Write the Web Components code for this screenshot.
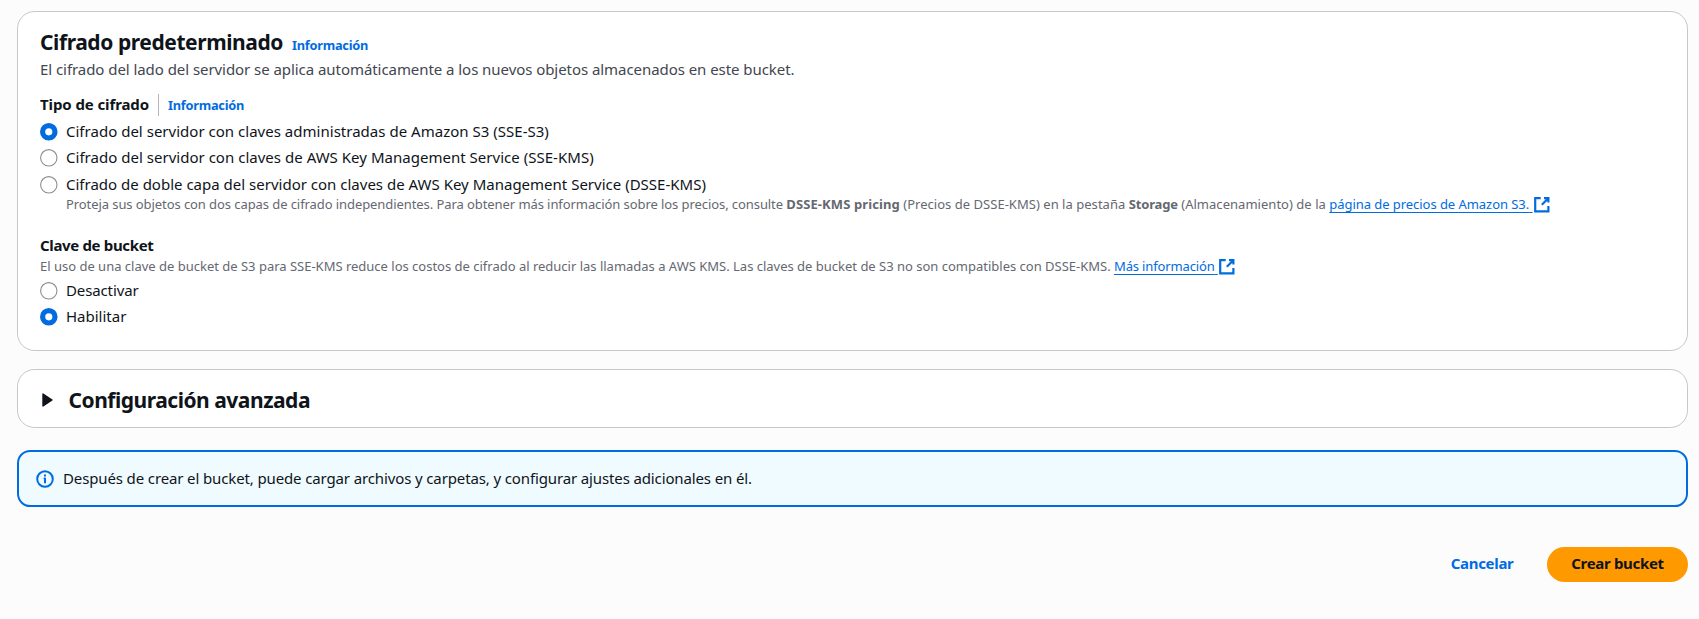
<!DOCTYPE html>
<html lang="es">
<head>
<meta charset="utf-8">
<title>Crear bucket</title>
<style>
html, body { margin: 0; }
body { background: #fcfcfd; color: #0f141a; font: 15px/22px "Noto Sans", "Open Sans", sans-serif; }
</style>
</head>
<body>
<bucket-page></bucket-page>

<template id="t-page">
<style>
:host { display: flex; flex-direction: column; padding: 11px 11px 0 17px; }
ui-card > * { white-space: pre; }
.hd { display: flex; align-items: baseline; height: 27px; gap: 9px; }
.desc { color: #424650; letter-spacing: -.057px; margin-top: 2px; }
.lab { display: flex; font-weight: 700; margin-top: 13px; letter-spacing: -.1px; }
.lab i { width: 1px; background: #b4b4bb; margin: 1px 9px -1px 9px; }
.lab info-link { padding-top: 1px; margin-bottom: -1px; }
.help { color: #656871; font-size: 13px; line-height: 18px; }
.more { padding-left: 26px; letter-spacing: -.078px; height: 18px; }
.more b { letter-spacing: .1px; }
.more .s { letter-spacing: .03px; }
.clave { font-weight: 700; margin: 21px 0 1px; letter-spacing: -.34px; }
.bk { letter-spacing: -.006px; height: 18px; }
.gap4 { margin-top: 4px; } .gap5 { margin-top: 5px; }
.adv { display: flex; align-items: center; }
.adv svg { width: 11px; height: 14px; margin: 1px 15.5px 0 2px; }
.adv ui-title { padding-top: 1px; margin-bottom: -1px; }
ui-card + ui-card { margin-top: 18px; }
ui-alert { margin-top: 22px; }
.foot { display: flex; justify-content: flex-end; gap: 33.5px; margin-top: 40px; }
</style>
<ui-card style="--pad:17px 22px 23px">
  <div class="hd"><ui-title style="--ls:-.42px">Cifrado predeterminado</ui-title><info-link>Información</info-link></div>
  <div class="desc">El cifrado del lado del servidor se aplica automáticamente a los nuevos objetos almacenados en este bucket.</div>
  <div class="lab"><span>Tipo de cifrado</span><i></i><info-link>Información</info-link></div>
  <ui-radio class="gap5" checked style="letter-spacing:.018px">Cifrado del servidor con claves administradas de Amazon S3 (SSE-S3)</ui-radio>
  <ui-radio class="gap4" style="letter-spacing:.022px">Cifrado del servidor con claves de AWS Key Management Service (SSE-KMS)</ui-radio>
  <ui-radio class="gap5" style="letter-spacing:.004px">Cifrado de doble capa del servidor con claves de AWS Key Management Service (DSSE-KMS)</ui-radio>
  <div class="help more">Proteja sus objetos con dos capas de cifrado independientes. Para obtener más información sobre los precios, consulte <b>DSSE-KMS pricing</b><span class="s"> (Precios de DSSE-KMS) en la pestaña </span><b style="letter-spacing:-.17px">Storage</b><span class="s"> (Almacenamiento) de la </span><ext-link style="letter-spacing:-.05px">página de precios de Amazon S3.</ext-link></div>
  <div class="clave">Clave de bucket</div>
  <div class="help bk">El uso de una clave de bucket de S3 para SSE-KMS reduce los costos de cifrado al reducir las llamadas a AWS KMS. Las claves de bucket de S3 no son compatibles con DSSE-KMS. <ext-link style="letter-spacing:-.147px">Más información</ext-link></div>
  <ui-radio class="gap4" style="letter-spacing:-.12px">Desactivar</ui-radio>
  <ui-radio class="gap4" checked style="letter-spacing:0">Habilitar</ui-radio>
</ui-card>
<ui-card style="--pad:16px 22px 14px">
  <div class="adv"><svg viewBox="0 0 11 14"><path d="M1 1v12l9-6z" fill="#0f141a" stroke="#0f141a" stroke-width="1.4" stroke-linejoin="round"/></svg><ui-title style="--ls:-.48px">Configuración avanzada</ui-title></div>
</ui-card>
<ui-alert>Después de crear el bucket, puede cargar archivos y carpetas, y configurar ajustes adicionales en él.</ui-alert>
<div class="foot"><ui-button style="letter-spacing:-.3px">Cancelar</ui-button><ui-button primary style="letter-spacing:-.32px">Crear bucket</ui-button></div>
</template>

<template id="t-card"><style>
:host { display: block; box-sizing: border-box; border: 1px solid #c6c6cd; border-radius: 17.6px; background: #fff; padding: var(--pad); }
</style><slot></slot></template>

<template id="t-title"><style>
:host { display: block; font-size: 21px; line-height: 27px; font-weight: 700; letter-spacing: var(--ls); }
</style><slot></slot></template>

<template id="t-info"><style>
:host { display: block; color: #006ce0; font-size: 12.8px; font-weight: 700; letter-spacing: -.26px; }
</style><slot></slot></template>

<template id="t-radio"><style>
:host { display: flex; align-items: center; height: 22px; }
svg { width: 17.6px; height: 17.6px; margin: 1px 8.4px 0 0; overflow: visible; }
.on { display: none; }
:host([checked]) .on { display: inline; }
:host([checked]) .off { display: none; }
</style><svg viewBox="0 0 17.6 17.6"><circle class="off" cx="8.8" cy="8.8" r="8.2" fill="#fff" stroke="#8c8c94" stroke-width="1.1"/><circle class="on" cx="8.8" cy="8.8" r="6.2" fill="#fff" stroke="#006ce0" stroke-width="5.2"/></svg><slot></slot></template>

<template id="t-ext"><style>
:host { display: inline; color: #006ce0; }
.u { text-decoration: underline; text-decoration-thickness: 1px; text-underline-offset: 3px; text-decoration-skip-ink: none; }
svg { width: 17.6px; height: 17.6px; vertical-align: -1px; margin: -4px 0; }
</style><span class="u"><slot></slot> </span><svg viewBox="0 0 16 16" fill="none" stroke="#006ce0" stroke-width="2"><path d="M10 2h4v4M8 8l6-6M14 9.05V14H2V2h5"/></svg></template>

<template id="t-alert"><style>
:host { display: flex; align-items: center; box-sizing: border-box; height: 57px; border: 2px solid #006ce0; border-radius: 13.2px; background: #f0fbff; padding: 0 17px 1px; letter-spacing: -.128px; }
svg { width: 18px; height: 18px; margin: 1px 9px 0 0; }
</style><svg viewBox="0 0 18 18" fill="none" stroke="#006ce0" stroke-width="2"><circle cx="9" cy="9" r="7.8"/><path d="M9 7.7v5.5M9 4.4v2" /><path d="M7.4 8.2h1.6" stroke-width="1"/></svg><slot></slot></template>

<template id="t-button"><style>
:host { display: flex; align-items: center; justify-content: center; box-sizing: border-box; height: 35px; font-weight: 700; color: #006ce0; padding-bottom: 3px; }
:host([primary]) { width: 141px; border-radius: 18px; background: #ff9900; color: #0f141a; }
</style><slot></slot></template>

<script>
for (const [name, id] of [['ui-card', 't-card'], ['ui-title', 't-title'], ['info-link', 't-info'], ['ui-radio', 't-radio'], ['ext-link', 't-ext'], ['ui-alert', 't-alert'], ['ui-button', 't-button'], ['bucket-page', 't-page']]) {
  customElements.define(name, class extends HTMLElement {
    constructor() {
      super();
      this.attachShadow({ mode: 'open' }).append(document.getElementById(id).content.cloneNode(true));
    }
  });
}
</script>
</body>
</html>
